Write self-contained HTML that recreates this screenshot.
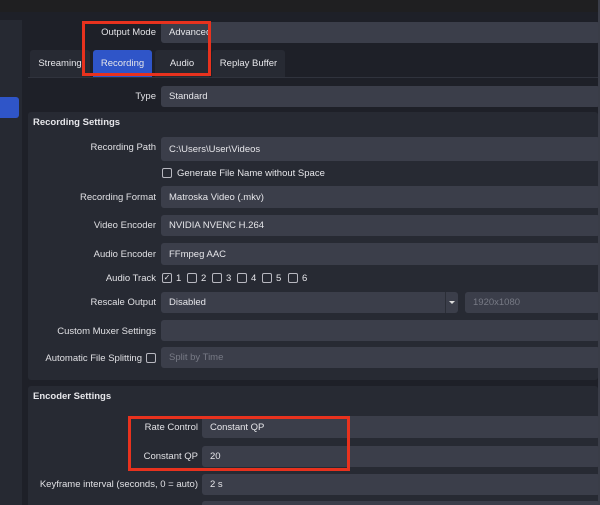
<!DOCTYPE html>
<html style="width:600px;height:505px;overflow:hidden"><head><style>
*{margin:0;padding:0;box-sizing:border-box}
body{width:600px;height:505px;overflow:hidden;background:#1e2028;font-family:"Liberation Sans",sans-serif;font-size:9.5px;color:#e6e6ea;position:relative}
div{position:absolute}
.in{background:#3b3e4a;border-radius:3px;padding-left:8px;display:flex;align-items:center;white-space:nowrap}
.lb{text-align:right;white-space:nowrap;color:#e0e0e4}
.cb{width:10px;height:10px;border:1px solid #b8b8c0;border-radius:2px}
.tab{top:50px;height:27px;background:#272a33;border-radius:3px 3px 0 0;display:flex;align-items:center;justify-content:center}
.hd{font-weight:bold;font-size:9.5px}
.red{border:3px solid #e8321e}
</style></head><body>
<div style="left:0;top:0;width:600px;height:12px;background:#1f1f21"></div>
<div style="left:0;top:20px;width:22px;height:485px;background:#262932"></div>
<div style="left:0;top:97px;width:19px;height:21px;background:#2f55c8;border-radius:0 3px 3px 0"></div>

<div class="lb" style="left:60px;width:96px;top:27px">Output Mode</div>
<div class="in" style="left:161px;top:22px;width:439px;height:21px">Advanced</div>

<div style="left:28px;top:77px;width:572px;height:1px;background:#30333d"></div>
<div class="tab" style="left:30px;width:60px">Streaming</div>
<div class="tab" style="left:93px;width:59px;background:#2f55c8">Recording</div>
<div class="tab" style="left:155px;width:54px">Audio</div>
<div class="tab" style="left:212px;width:73px">Replay Buffer</div>

<div class="lb" style="left:60px;width:96px;top:91px">Type</div>
<div class="in" style="left:161px;top:86px;width:439px;height:21px">Standard</div>

<div style="left:28px;top:112px;width:570px;height:268px;background:#272a33;border-radius:3px"></div>
<div class="hd" style="left:33px;top:117px">Recording Settings</div>
<div class="lb" style="left:40px;width:116px;top:142px">Recording Path</div>
<div class="in" style="left:161px;top:137px;width:439px;height:24px">C:\Users\User\Videos</div>
<div class="cb" style="left:162px;top:168px"></div>
<div style="left:177px;top:168px">Generate File Name without Space</div>
<div class="lb" style="left:40px;width:116px;top:192px">Recording Format</div>
<div class="in" style="left:161px;top:186px;width:439px;height:22px">Matroska Video (.mkv)</div>
<div class="lb" style="left:40px;width:116px;top:220px">Video Encoder</div>
<div class="in" style="left:161px;top:215px;width:439px;height:21px">NVIDIA NVENC H.264</div>
<div class="lb" style="left:40px;width:116px;top:249px">Audio Encoder</div>
<div class="in" style="left:161px;top:243px;width:439px;height:22px">FFmpeg AAC</div>
<div class="lb" style="left:40px;width:116px;top:273px">Audio Track</div>
<div class="cb" style="left:162px;top:273px;font-size:8px;line-height:8px;text-align:center">✓</div><div style="left:176px;top:273px">1</div>
<div class="cb" style="left:187px;top:273px"></div><div style="left:201px;top:273px">2</div>
<div class="cb" style="left:212px;top:273px"></div><div style="left:226px;top:273px">3</div>
<div class="cb" style="left:237px;top:273px"></div><div style="left:251px;top:273px">4</div>
<div class="cb" style="left:262px;top:273px"></div><div style="left:276px;top:273px">5</div>
<div class="cb" style="left:288px;top:273px"></div><div style="left:302px;top:273px">6</div>
<div class="lb" style="left:40px;width:116px;top:297px">Rescale Output</div>
<div class="in" style="left:161px;top:292px;width:297px;height:21px">Disabled</div>
<div style="left:445px;top:292px;width:1px;height:21px;background:#2b2e37"></div>
<div style="left:449px;top:301px;width:0;height:0;border-left:3px solid transparent;border-right:3px solid transparent;border-top:3px solid #ddd"></div>
<div class="in" style="left:465px;top:292px;width:135px;height:21px;color:#777a85">1920x1080</div>
<div class="lb" style="left:30px;width:126px;top:326px">Custom Muxer Settings</div>
<div class="in" style="left:161px;top:320px;width:439px;height:21px"></div>
<div class="lb" style="left:20px;width:122px;top:353px">Automatic File Splitting</div>
<div class="cb" style="left:146px;top:353px"></div>
<div class="in" style="left:161px;top:347px;width:439px;height:21px;color:#777a85">Split by Time</div>

<div style="left:28px;top:386px;width:570px;height:119px;background:#272a33;border-radius:3px 3px 0 0"></div>
<div class="hd" style="left:33px;top:391px">Encoder Settings</div>
<div class="lb" style="left:40px;width:158px;top:422px">Rate Control</div>
<div class="in" style="left:202px;top:416px;width:398px;height:22px">Constant QP</div>
<div class="lb" style="left:40px;width:158px;top:451px">Constant QP</div>
<div class="in" style="left:202px;top:446px;width:398px;height:21px">20</div>
<div class="lb" style="left:20px;width:178px;top:479px">Keyframe interval (seconds, 0 = auto)</div>
<div class="in" style="left:202px;top:474px;width:398px;height:21px">2 s</div>
<div style="left:202px;top:501px;width:398px;height:4px;background:#3b3e4a;border-radius:3px 3px 0 0"></div>

<div style="left:598px;top:0;width:2px;height:505px;background:#3a3d48"></div>
<div class="red" style="left:82px;top:21px;width:129px;height:55px"></div>
<div class="red" style="left:128px;top:416px;width:222px;height:55px"></div>
</body></html>
